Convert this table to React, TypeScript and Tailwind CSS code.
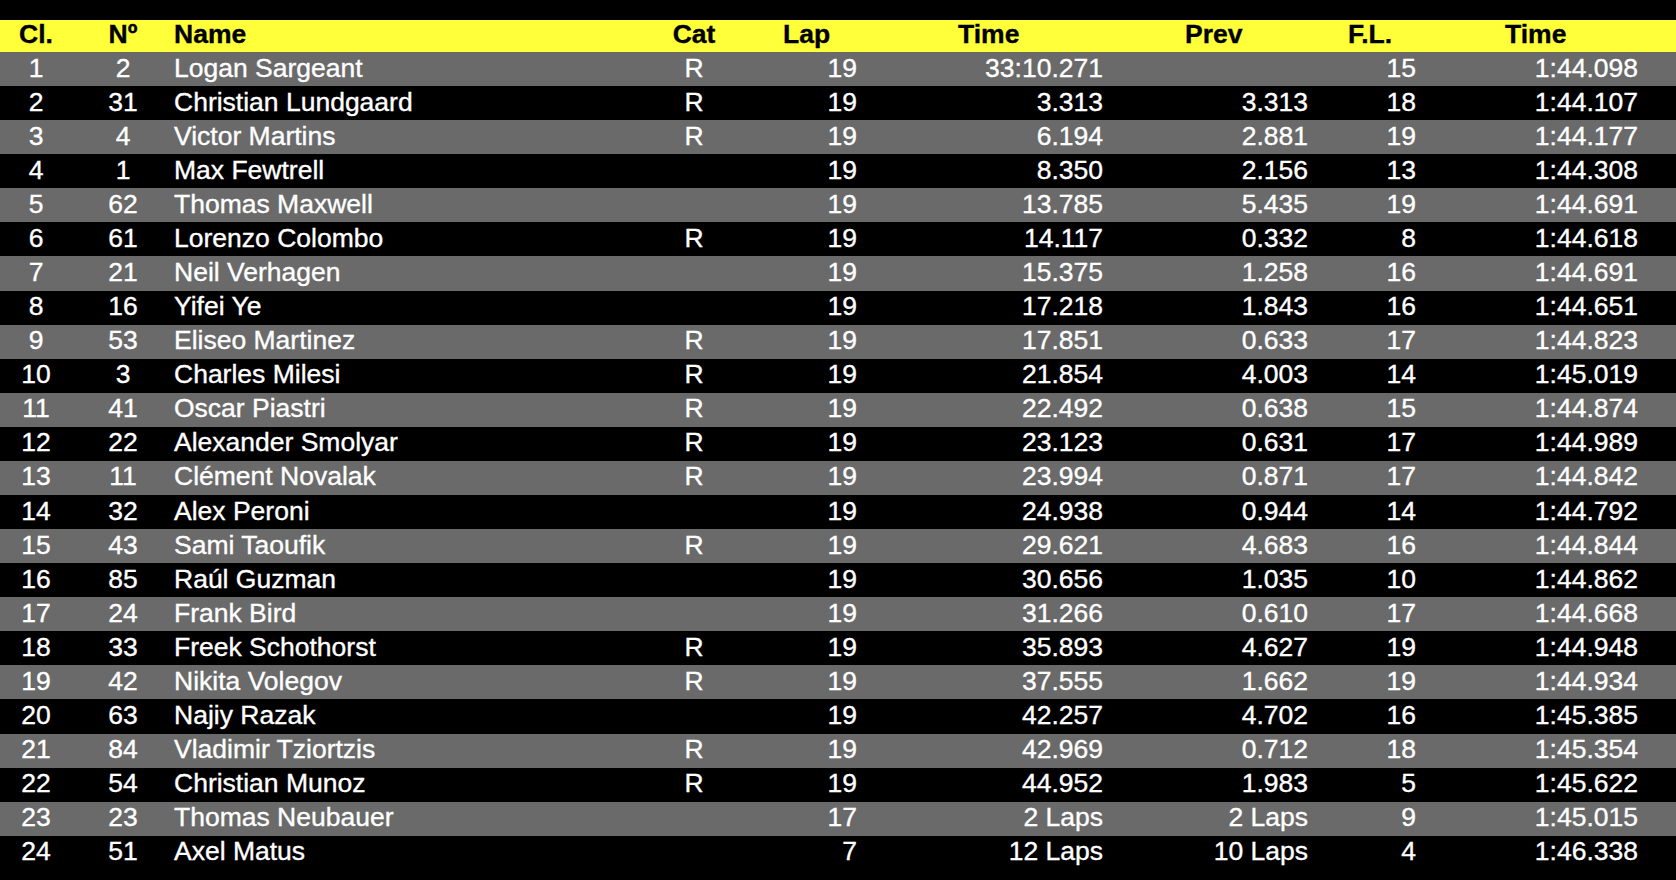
const rows: string[][] = [
  ['1', '2', 'Logan Sargeant', 'R', '19', '33:10.271', '', '15', '1:44.098'],
  ['2', '31', 'Christian Lundgaard', 'R', '19', '3.313', '3.313', '18', '1:44.107'],
  ['3', '4', 'Victor Martins', 'R', '19', '6.194', '2.881', '19', '1:44.177'],
  ['4', '1', 'Max Fewtrell', '', '19', '8.350', '2.156', '13', '1:44.308'],
  ['5', '62', 'Thomas Maxwell', '', '19', '13.785', '5.435', '19', '1:44.691'],
  ['6', '61', 'Lorenzo Colombo', 'R', '19', '14.117', '0.332', '8', '1:44.618'],
  ['7', '21', 'Neil Verhagen', '', '19', '15.375', '1.258', '16', '1:44.691'],
  ['8', '16', 'Yifei Ye', '', '19', '17.218', '1.843', '16', '1:44.651'],
  ['9', '53', 'Eliseo Martinez', 'R', '19', '17.851', '0.633', '17', '1:44.823'],
  ['10', '3', 'Charles Milesi', 'R', '19', '21.854', '4.003', '14', '1:45.019'],
  ['11', '41', 'Oscar Piastri', 'R', '19', '22.492', '0.638', '15', '1:44.874'],
  ['12', '22', 'Alexander Smolyar', 'R', '19', '23.123', '0.631', '17', '1:44.989'],
  ['13', '11', 'Clément Novalak', 'R', '19', '23.994', '0.871', '17', '1:44.842'],
  ['14', '32', 'Alex Peroni', '', '19', '24.938', '0.944', '14', '1:44.792'],
  ['15', '43', 'Sami Taoufik', 'R', '19', '29.621', '4.683', '16', '1:44.844'],
  ['16', '85', 'Raúl Guzman', '', '19', '30.656', '1.035', '10', '1:44.862'],
  ['17', '24', 'Frank Bird', '', '19', '31.266', '0.610', '17', '1:44.668'],
  ['18', '33', 'Freek Schothorst', 'R', '19', '35.893', '4.627', '19', '1:44.948'],
  ['19', '42', 'Nikita Volegov', 'R', '19', '37.555', '1.662', '19', '1:44.934'],
  ['20', '63', 'Najiy Razak', '', '19', '42.257', '4.702', '16', '1:45.385'],
  ['21', '84', 'Vladimir Tziortzis', 'R', '19', '42.969', '0.712', '18', '1:45.354'],
  ['22', '54', 'Christian Munoz', 'R', '19', '44.952', '1.983', '5', '1:45.622'],
  ['23', '23', 'Thomas Neubauer', '', '17', '2 Laps', '2 Laps', '9', '1:45.015'],
  ['24', '51', 'Axel Matus', '', '7', '12 Laps', '10 Laps', '4', '1:46.338'],
];

// column template shared by header and rows
const cols =
  'grid grid-cols-[72px_102px_498px_44px_141px_246px_205px_108px_222px_1fr]';

export default function App() {
  return (
    <div className="h-[880px] w-[1676px] overflow-hidden bg-black pt-[20px] font-['Liberation_Sans',Arial,sans-serif] text-[26.5px] [-webkit-text-stroke:0.35px]">
      <div className={`${cols} h-[32px] items-center bg-[#ffff3a] pb-[3px] font-bold leading-[29px] text-black`}>
        <div className="text-center">Cl.</div>
        <div className="text-center">Nº</div>
        <div>Name</div>
        <div className="text-center">Cat</div>
        <div className="pl-[67px]">Lap</div>
        <div className="pl-[101px]">Time</div>
        <div className="pl-[82px]">Prev</div>
        <div className="pl-[40px]">F.L.</div>
        <div className="pl-[89px]">Time</div>
        <div />
      </div>

      {rows.map((r, i) => (
        <div
          key={r[0]}
          className={`${cols} h-[34.09px] items-center pb-[2px] leading-[31px] text-white ${
            i % 2 === 0 ? 'bg-[#6a6a6a]' : 'bg-black'
          }`}
        >
          <div className="text-center">{r[0]}</div>
          <div className="text-center">{r[1]}</div>
          <div className="whitespace-nowrap">{r[2]}</div>
          <div className="text-center">{r[3]}</div>
          <div className="text-right">{r[4]}</div>
          <div className="text-right">{r[5]}</div>
          <div className="text-right">{r[6]}</div>
          <div className="text-right">{r[7]}</div>
          <div className="text-right">{r[8]}</div>
          <div />
        </div>
      ))}
    </div>
  );
}
